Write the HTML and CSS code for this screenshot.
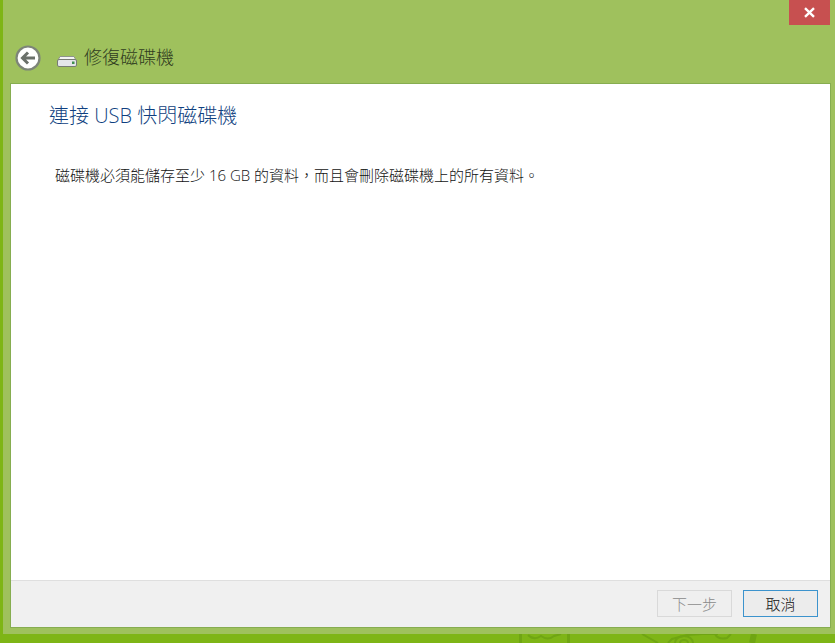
FILE: index.html
```html
<!DOCTYPE html>
<html lang="zh-Hant">
<head>
    <meta charset="UTF-8">
    <title>修復磁碟機</title>
    <link rel="stylesheet" href="styles.css">
</head>
<body>
    <div class="window">
        <div class="titlebar">
            <a class="close">
                <svg width="13" height="11" viewBox="0 0 13 11"><path d="M2 1.2 11 9.8M11 1.2 2 9.8" stroke="#fff" stroke-width="2.4" fill="none"/></svg>
            </a>
        </div>
        <div class="navbar">
            <a class="back">
                <svg width="28" height="28" viewBox="0 0 28 28">
                    <circle cx="14" cy="14" r="11.5" fill="#fff" stroke="#7d8578" stroke-width="2.2"/>
                    <path d="M21 14H9M14 8.5 8.5 14 14 19.5" fill="none" stroke="#6a706a" stroke-width="3"/>
                </svg>
            </a>
            <svg class="drive" width="20" height="11" viewBox="0 0 20 11">
                <path d="M3 .5H17L19.5 5H.5Z" fill="#f4f5f4" stroke="#8f948c"/>
                <rect x="0.5" y="3.5" width="19" height="7" rx="1.5" fill="#e4e6ea" stroke="#777c74"/>
                <rect x="15" y="5.5" width="2.5" height="2.5" fill="#3f8f4f"/>
            </svg>
            <span class="navtitle">修復磁碟機</span>
        </div>
        <div class="panel">
            <div class="content">
                <h1>連接 USB 快閃磁碟機</h1>
                <p>磁碟機必須能儲存至少 16 GB 的資料，而且會刪除磁碟機上的所有資料。</p>
            </div>
            <div class="footer">
                <input class="btn disabled" type="button" value="下一步">
                <input class="btn primary" type="button" value="取消">
            </div>
        </div>
    </div>
    <svg class="wallpaper" width="835" height="9" viewBox="0 0 835 9">
        <g fill="none" stroke="#6fa512" stroke-width="2">
            <path d="M520.500 0V9M568.500 0V9" stroke-width="3"/>
            <path d="M528 1Q534 7 541 2Q548 7 554 2L561 0"/>
            <path d="M642 0 658 9M668 9 672 5 687 1 702 0 718 0"/>
            <path d="M675 9A9 7 0 0 1 693 9M680 9A4 3 0 0 1 688 9"/>
            <path d="M715 0Q718 6 727 4L731 0"/>
            <path d="M754 0 752 9" stroke-width="6"/>
        </g>
    </svg>
</body>
</html>
```

FILE: styles.css
```css
*{
    margin: 0;
    padding: 0;
    box-sizing: border-box;
}
body{
    width: 835px;
    height: 643px;
    overflow: hidden;
    background-color: #7eb516;
    padding-left: 3px;
    font-family: "Open Sans", "Noto Sans CJK TC", sans-serif;
}
.window{
    height: 634px;
    background-color: #9fc15d;
    display: flex;
    flex-direction: column;
}
.titlebar{
    height: 25px;
    display: flex;
    justify-content: flex-end;
    padding-right: 5px;
}
.close{
    width: 41px;
    height: 25px;
    background-color: #c75050;
    display: flex;
    align-items: center;
    justify-content: center;
}
.navbar{
    height: 59px;
    display: flex;
    align-items: center;
    padding: 7px 0 0 11px;
}
.back{
    height: 28px;
}
.drive{
    margin: 7px 0 0 15px;
}
.navtitle{
    margin: -2px 0 0 7px;
    font-size: 18px;
    line-height: 24px;
    color: #2f3c20;
    font-weight: 300;
}
.panel{
    flex: 1;
    margin: 0 5px 7px 8px;
    display: flex;
    flex-direction: column;
    background-color: #fff;
    box-shadow: 0 0 0 1px #86ad50;
}
.content{
    flex: 1;
    padding: 18px 39px;
}
h1{
    font-size: 20px;
    line-height: 28px;
    font-weight: 300;
    margin-left: -1px;
    color: #0f3f80;
}
p{
    margin: 34px 0 0 5px;
    font-size: 15px;
    line-height: 22px;
    font-weight: 300;
    color: #111;
}
.footer{
    height: 47px;
    background-color: #f0f0f0;
    border-top: 1px solid #dfdfdf;
    display: flex;
    justify-content: flex-end;
    align-items: center;
    gap: 11px;
    padding: 0 12px 1px 0;
}
.btn{
    width: 75px;
    height: 27px;
    font-family: "Noto Sans CJK TC", sans-serif;
    font-size: 15px;
    font-weight: 300;
    background-color: #ececec;
    border: 1px solid #adadad;
    color: #111;
}
.disabled{
    background-color: #efefef;
    border-color: #d9d9d9;
    color: #8a8a8a;
}
.primary{
    border-color: #3c93cd;
    background-color: #ececec;
}
.wallpaper{
    display: block;
    margin-left: -3px;
}
```
